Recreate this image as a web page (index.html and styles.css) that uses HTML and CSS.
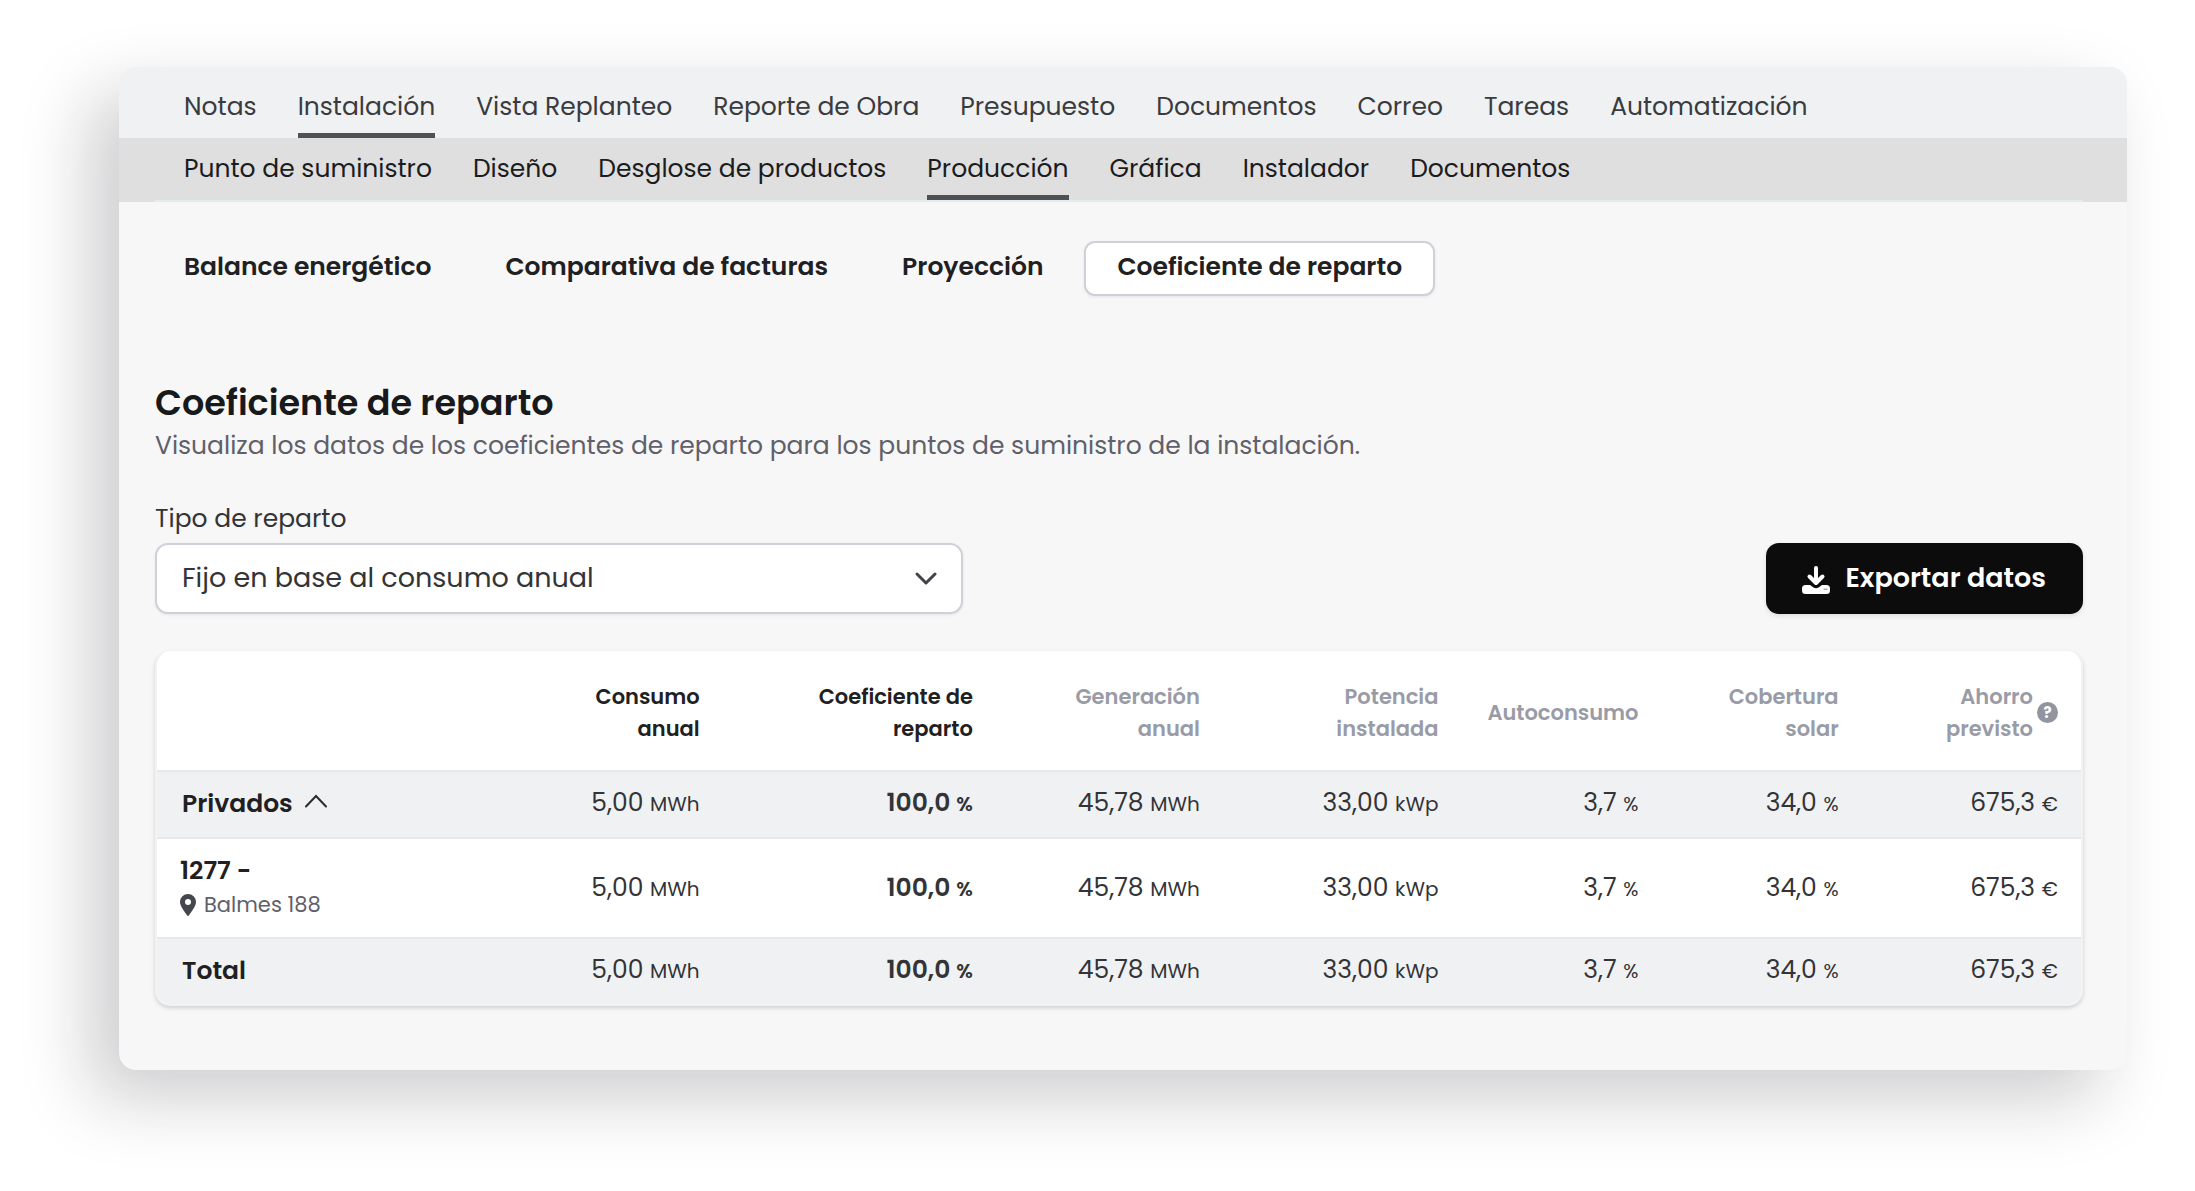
FILE: index.html
```html
<!doctype html>
<html lang="es">
    <head>
        <meta charset="utf-8">
        <title>Coeficiente de reparto</title>
        <link rel="stylesheet" href="styles.css">
    </head>

    <body>
        <div class="panel">
            <nav class="mainnav">
                <a href="#">Notas</a>
                <a href="#" class="active">Instalación</a>
                <a href="#">Vista Replanteo</a>
                <a href="#">Reporte de Obra</a>
                <a href="#">Presupuesto</a>
                <a href="#">Documentos</a>
                <a href="#">Correo</a>
                <a href="#">Tareas</a>
                <a href="#">Automatización</a>
            </nav>
            <nav class="subnav">
                <a href="#">Punto de suministro</a>
                <a href="#">Diseño</a>
                <a href="#">Desglose de productos</a>
                <a href="#" class="active">Producción</a>
                <a href="#">Gráfica</a>
                <a href="#">Instalador</a>
                <a href="#">Documentos</a>
            </nav>
            <div class="content">
                <div class="tabs">
                    <button type="button" class="tab">Balance energético</button>
                    <button type="button" class="tab">Comparativa de facturas</button>
                    <button type="button" class="tab">Proyección</button>
                    <button type="button" class="tab selected">Coeficiente de reparto</button>
                </div>

                <h1 class="title">Coeficiente de reparto</h1>
                <p class="subtitle">Visualiza los datos de los coeficientes de reparto para los puntos de suministro de la instalación.</p>

                <div class="toolbar">
                    <div class="field">
                        <label for="tipo">Tipo de reparto</label>
                        <div class="selectbox">
                            <select id="tipo">
                                <option>Fijo en base al consumo anual</option>
                            </select>
                            <svg class="chevron" viewBox="0 0 22 14"><path d="M2 2l9 9 9-9"/></svg>
                        </div>
                    </div>
                    <button type="button" class="export">
                        <svg class="download" viewBox="0 0 28 28">
                            <path class="arrow" d="M14 2v14M7.500 10.500l6.500 6.500 6.500-6.500"/>
                            <path class="tray" d="M3.500 19h4.500l3.500 2.500q2.500 1.500 5 0l3.500-2.500h4.500q3.500 0 3.500 3.500v2q0 3.500-3.500 3.500h-21q-3.500 0-3.500-3.500v-2q0-3.500 3.500-3.500z"/>
                            <path class="dot" d="M22 23.200h3"/>
                        </svg>
                        Exportar datos
                    </button>
                </div>

                <table class="data">
                    <colgroup>
                        <col class="c-name"><col class="c-consumo"><col class="c-coef"><col class="c-gen">
                        <col class="c-pot"><col class="c-auto"><col class="c-cob"><col class="c-ahorro">
                    </colgroup>
                    <thead>
                        <tr>
                            <td></td>
                            <th class="dark">Consumo<br>anual</th>
                            <th class="dark">Coeficiente de<br>reparto</th>
                            <th>Generación<br>anual</th>
                            <th>Potencia<br>instalada</th>
                            <th>Autoconsumo</th>
                            <th>Cobertura<br>solar</th>
                            <th>
                                <div class="withhelp">
                                    <span>Ahorro<br>previsto</span>
                                    <span class="help">?</span>
                                </div>
                            </th>
                        </tr>
                    </thead>
                    <tbody>
                        <tr class="group">
                            <th>Privados <svg class="caret" viewBox="0 0 22 14"><path d="M1 12.500L11 2l10 10.500"/></svg></th>
                            <td>5,00 <small>MWh</small></td>
                            <td class="bold">100,0 <small>%</small></td>
                            <td>45,78 <small>MWh</small></td>
                            <td>33,00 <small>kWp</small></td>
                            <td>3,7 <small>%</small></td>
                            <td>34,0 <small>%</small></td>
                            <td>675,3 <small>€</small></td>
                        </tr>
                        <tr class="item">
                            <th>
                                <div>1277 -</div>
                                <div class="place">
                                    <svg class="pin" viewBox="0 0 16 22"><path fill-rule="evenodd" d="M8 0a8 8 0 0 1 8 8c0 4-4.500 9.500-7 13.300a1.200 1.200 0 0 1-2 0C4.500 17.500 0 12 0 8a8 8 0 0 1 8-8zM8 5a3 3 0 1 0 0 6a3 3 0 1 0 0-6z"/></svg>
                                    Balmes 188
                                </div>
                            </th>
                            <td>5,00 <small>MWh</small></td>
                            <td class="bold">100,0 <small>%</small></td>
                            <td>45,78 <small>MWh</small></td>
                            <td>33,00 <small>kWp</small></td>
                            <td>3,7 <small>%</small></td>
                            <td>34,0 <small>%</small></td>
                            <td>675,3 <small>€</small></td>
                        </tr>
                    </tbody>
                    <tfoot>
                        <tr class="group">
                            <th>Total</th>
                            <td>5,00 <small>MWh</small></td>
                            <td class="bold">100,0 <small>%</small></td>
                            <td>45,78 <small>MWh</small></td>
                            <td>33,00 <small>kWp</small></td>
                            <td>3,7 <small>%</small></td>
                            <td>34,0 <small>%</small></td>
                            <td>675,3 <small>€</small></td>
                        </tr>
                    </tfoot>
                </table>
            </div>
        </div>
    </body>

</html>
```

FILE: styles.css
```css
*{
    box-sizing: border-box;
}

body{
    margin: 0;
    padding: 67px 68px 100px 119px;
    background-color: white;
    color: #333437;
    font-family: Poppins, Inter, sans-serif;
    font-size: 25px;
    line-height: 36px;
}

button, select{
    font-family: inherit;
    color: inherit;
}

.panel{
    background-color: #f7f7f7;
    border-radius: 17px;
    overflow: hidden;
    box-shadow: -28px 28px 70px rgba(20, 18, 28, 0.21);
}

/* navigation bars */
.mainnav, .subnav{
    display: flex;
    align-items: flex-end;
    gap: 41px;
    padding: 0 65px;
}

.mainnav{
    height: 71px;
    background-color: #f0f1f3;
    color: #3a3b3e;
}

.subnav{
    height: 64px;
    background-color: #dfdfdf;
    color: #1b1c1e;
    padding-bottom: 2px;
    background-image: linear-gradient(#e4ecee, #e4ecee);
    background-repeat: no-repeat;
    background-size: calc(100% - 80px) 2px;
    background-position: 36px 100%;
}

.mainnav a, .subnav a{
    padding-bottom: 8px;
    color: inherit;
    text-decoration: none;
    white-space: nowrap;
    border-bottom: 5px solid transparent;
}

.mainnav a.active, .subnav a.active{
    border-bottom-color: #4f5254;
}

.content{
    padding: 39px 44px 64px 36px;
}

/* tabs */
.tabs{
    display: flex;
    gap: 8px;
    margin-left: -4px;
}

.tab{
    height: 55px;
    padding: 0 31px 4px;
    border: 2px solid transparent;
    border-radius: 11px;
    background: none;
    color: #1f2022;
    font-size: 25px;
    font-weight: 600;
}

.tab.selected{
    background-color: white;
    border-color: #d0d1d8;
    box-shadow: 0 1px 3px rgba(0, 0, 0, 0.08);
}

.title{
    margin: 82px 0 0;
    color: #18191b;
    font-size: 35px;
    line-height: 50px;
    font-weight: 600;
}

.subtitle{
    margin: 0;
    color: #5f606a;
}

.toolbar{
    display: flex;
    justify-content: space-between;
    align-items: flex-end;
    margin-top: 37px;
}

.field{
    width: 41.9%;
}

.field label{
    display: block;
    margin-bottom: 6px;
}

.selectbox{
    position: relative;
}

.selectbox select{
    appearance: none;
    display: block;
    width: 100%;
    height: 71px;
    padding: 0 60px 2px 25px;
    border: 2px solid #d0d1d8;
    border-radius: 13px;
    background-color: white;
    box-shadow: 0 1px 3px rgba(0, 0, 0, 0.08);
    font-size: 27px;
}

.chevron{
    position: absolute;
    right: 26px;
    top: 29px;
    width: 22px;
    height: 14px;
    fill: none;
    stroke: #3f4248;
    stroke-width: 3;
    stroke-linecap: round;
    stroke-linejoin: round;
}

.export{
    display: flex;
    align-items: center;
    gap: 15px;
    height: 71px;
    padding: 0 37px 2px 36px;
    border: none;
    border-radius: 13px;
    background-color: #0c0c0c;
    box-shadow: 0 2px 5px rgba(0, 0, 0, 0.1);
    color: white;
    font-size: 27px;
    font-weight: 600;
}

.download{
    width: 28px;
    height: 28px;
    margin-top: 4px;
}

.download .arrow{
    fill: none;
    stroke: white;
    stroke-width: 4;
    stroke-linecap: round;
    stroke-linejoin: round;
}

.download .tray{
    fill: white;
}

.download .dot{
    stroke: #8a8a8a;
    stroke-width: 1;
    stroke-linecap: round;
}

/* data table */
.data{
    width: 100%;
    margin-top: 37px;
    table-layout: fixed;
    border-collapse: separate;
    border-spacing: 0;
    border: 2px solid #f1f2f3;
    border-top: none;
    border-radius: 15px;
    overflow: hidden;
    background-color: white;
    box-shadow: 0 2px 4px rgba(0, 0, 0, 0.16);
}

.c-name{ width: 16%; }
.c-consumo{ width: 13.4%; }
.c-coef{ width: 14.2%; }
.c-gen{ width: 11.8%; }
.c-pot{ width: 12.4%; }
.c-auto{ width: 10.4%; }
.c-cob{ width: 10.4%; }
.c-ahorro{ width: 11.4%; }

.data th, .data td{
    padding: 0 23px 0 0;
    text-align: right;
    vertical-align: middle;
    white-space: nowrap;
}

.data thead th{
    height: 119px;
    padding-top: 4px;
    color: #999ba6;
    font-size: 21px;
    line-height: 32px;
    font-weight: 600;
}

.data thead th.dark{
    color: #1f2022;
}

.withhelp{
    display: flex;
    justify-content: flex-end;
    align-items: center;
    gap: 4px;
}

.help{
    width: 21px;
    height: 21px;
    border-radius: 50%;
    background-color: #92949f;
    color: white;
    font-size: 15px;
    line-height: 21px;
    font-weight: 700;
    text-align: center;
}

.data tbody th, .data tfoot th{
    padding-left: 25px;
    color: #1f2022;
    text-align: left;
    font-weight: 600;
}

.data tbody th, .data tbody td, .data tfoot th, .data tfoot td{
    border-top: 2px solid #e6e8ea;
}

.data .group th, .data .group td{
    height: 67px;
    padding-bottom: 2px;
    background-color: #f0f1f3;
}

.data .item th, .data .item td{
    height: 100px;
}

.data .item th{
    padding-left: 23px;
    line-height: 34px;
}

.data small{
    font-size: 20px;
}

.data .bold{
    font-weight: 600;
}

.caret{
    width: 22px;
    height: 14px;
    margin-left: 6px;
    vertical-align: 4px;
    fill: none;
    stroke: #2b2c2f;
    stroke-width: 2;
    stroke-linecap: round;
}

.data .place{
    display: flex;
    align-items: center;
    gap: 8px;
    color: #5f606a;
    font-size: 21px;
    font-weight: 400;
}

.pin{
    width: 16px;
    height: 22px;
    fill: #45474f;
}
```
